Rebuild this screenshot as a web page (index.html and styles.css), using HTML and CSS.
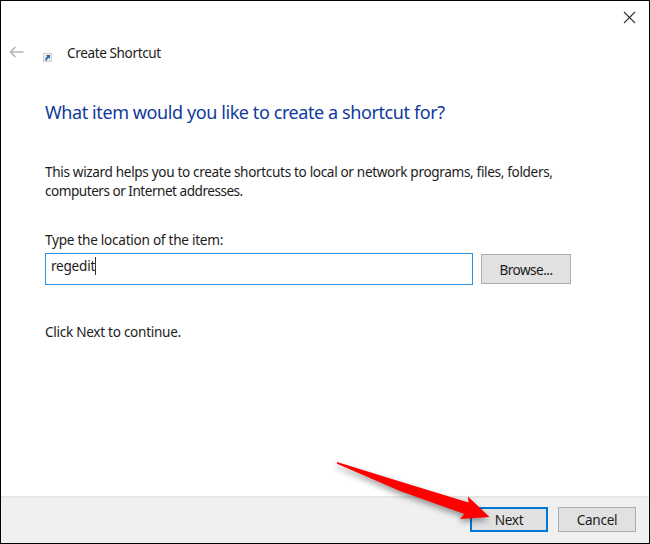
FILE: index.html
```html
<!DOCTYPE html>
<html lang="en">
<head>
<meta charset="utf-8">
<title>Create Shortcut</title>
<link rel="stylesheet" href="styles.css">
</head>
<body>
<div class="dialog">
  <header class="titlebar">
    <svg class="close" width="13" height="13" viewBox="0 0 13 13"><path d="M1 1L12 12M12 1L1 12"/></svg>
  </header>
  <div class="caption">
    <svg class="back" width="15" height="12" viewBox="0 0 15 12"><path d="M14.500 6H1.500M6.500 1L1.500 6L6.500 11"/></svg>
    <svg class="shortcut-icon" width="9" height="9" viewBox="0 0 9 9"><rect x=".5" y=".5" width="8" height="8" fill="#eeeeed" stroke="#cfcfcf"/><path d="M3 2H7V6L5.800 4.800C4.500 5.500 4 6.200 4 7.500H2.300C2 5.500 3 4.200 4.300 3.400Z" fill="#2762ae"/></svg>
    <span class="caption-text">Create Shortcut</span>
  </div>
  <main class="content">
    <h1 class="heading">What item would you like to create a shortcut for?</h1>
    <p class="intro"><span class="line1">This wizard helps you to create shortcuts to local or network programs, files, folders,</span><br><span class="line2">computers or Internet addresses.</span></p>
    <div class="label"><span>Type the location of the item:</span></div>
    <div class="field-row">
      <div class="field"><span class="value">regedit</span><span class="caret"></span></div>
      <div class="button browse"><span>Browse...</span></div>
    </div>
    <p class="hint"><span>Click Next to continue.</span></p>
  </main>
  <footer class="footer">
    <div class="button next"><span>Next</span></div>
    <div class="button cancel"><span>Cancel</span></div>
  </footer>
  <svg class="arrow" width="650" height="544" viewBox="0 0 650 544"><path d="M337 462L400 481.500L468.500 502.500L468 496.500L489.500 517L460 519L464.500 514L400 491L337 463.700Z"/></svg>
</div>
</body>
</html>
```
FILE: styles.css
```css
* { box-sizing: border-box; }
body { margin: 0; background: #fff; }
.dialog {
  position: relative;
  display: flex;
  flex-direction: column;
  width: 650px;
  height: 544px;
  border: 1px solid #000;
  background: #fff;
  color: #1c1c1c;
  font: 13.6px/19px "Noto Sans", "Open Sans", sans-serif;
  white-space: nowrap;
  overflow: hidden;
}
.titlebar { display: flex; justify-content: flex-end; height: 40px; padding: 10px 13px 0 0; }
.close { fill: none; stroke: #333; stroke-width: 1.1; }
.caption { display: flex; height: 24px; padding-left: 8px; }
.back { margin-top: 5px; fill: none; stroke: #b4b4b4; stroke-width: 1.6; }
.shortcut-icon { margin: 12px 0 0 19px; }
.caption-text { margin: 2px 0 0 15px; letter-spacing: -0.4px; }
.content { flex: 1; padding: 33px 0 0 44px; }
.heading { margin: 0; color: #103a9c; font-size: 18px; font-weight: 400; line-height: 28px; letter-spacing: -0.41px; }
.intro { margin: 36px 0 0; letter-spacing: -0.345px; }
.line2 { letter-spacing: -0.5px; }
.label { margin-top: 30px; letter-spacing: -0.27px; }
.field-row { display: flex; gap: 8px; margin-top: 4px; }
.field { display: flex; width: 428px; height: 32px; padding: 2px 0 0 5px; border: 1px solid #2f8fe0; letter-spacing: -0.25px; }
.caret { width: 1px; height: 18px; margin-top: 1px; background: #333; }
.button {
  display: flex;
  justify-content: center;
  align-items: center;
  background: #e1e1e1;
  border: 1px solid #adadad;
  letter-spacing: -0.3px;
}
.browse { width: 90px; height: 30px; margin-top: 1px; letter-spacing: -0.55px; }
.hint { margin: 37px 0 0; letter-spacing: -0.29px; }
.footer { display: flex; gap: 10px; justify-content: flex-end; height: 47px; padding: 9px 13px 0 0; border-top: 2px solid #e6e6e6; background: #f0f0f0; }
.footer .button { width: 78px; height: 25px; }
.footer .next { border: 2px solid #0078d7; }
.arrow { position: absolute; left: -1px; top: -1px; fill: #f00; filter: drop-shadow(-1px 3px 3px rgba(0, 0, 0, .4)); pointer-events: none; }
```
